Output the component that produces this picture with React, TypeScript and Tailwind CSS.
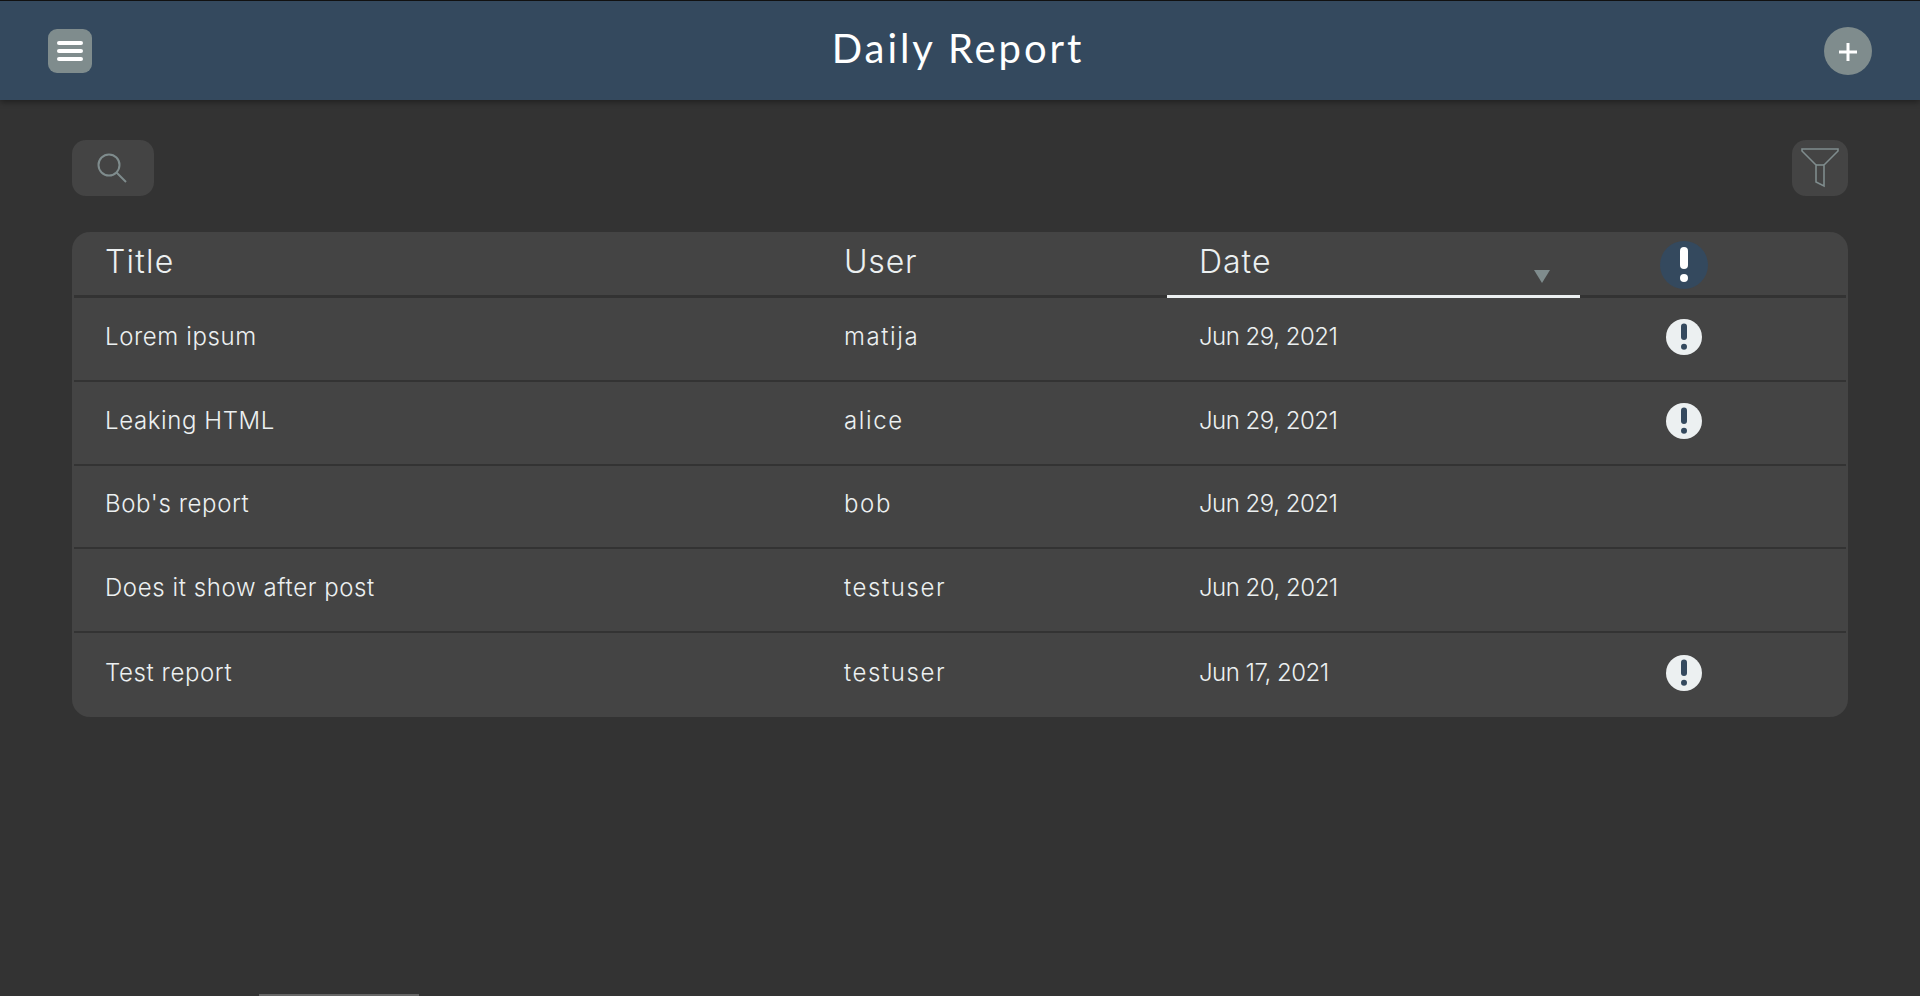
const REPORTS = [
  { title: "Lorem ipsum", user: "matija", date: "Jun 29, 2021", urgent: true },
  { title: "Leaking HTML", user: "alice", date: "Jun 29, 2021", urgent: true },
  { title: "Bob's report", user: "bob", date: "Jun 29, 2021", urgent: false },
  { title: "Does it show after post", user: "testuser", date: "Jun 20, 2021", urgent: false },
  { title: "Test report", user: "testuser", date: "Jun 17, 2021", urgent: true },
];

function AlertIcon({ size, bg, fg }: { size: number; bg: string; fg: string }) {
  return (
    <svg width={size} height={size} viewBox="0 0 48 48" className="block">
      <circle cx="24" cy="24" r="24" fill={bg} />
      <rect x="20" y="6" width="8" height="22" rx="4" fill={fg} />
      <circle cx="24" cy="37" r="4" fill={fg} />
    </svg>
  );
}

export default function App() {
  return (
    <main className="relative h-[996px] overflow-hidden bg-[#333333] font-['Inter',sans-serif] text-[#ecf0f1]">
      {/* Top bar */}
      <header className="relative flex h-[100px] items-center justify-between border-t-[1px] border-[#111111] bg-[#34495e] px-[48px] shadow-[0_2px_6px_rgba(0,0,0,0.4)]">
        <button className="flex h-[44px] w-[44px] flex-col items-center justify-center gap-[4px] rounded-[9px] bg-[#7f8c8d]">
          <span className="h-[4px] w-[26px] rounded-full bg-white" />
          <span className="h-[4px] w-[26px] rounded-full bg-white" />
          <span className="h-[4px] w-[26px] rounded-full bg-white" />
        </button>
        <h1 className="-mt-[5px] font-['Lato',sans-serif] text-[40px] font-normal leading-none tracking-[2.9px] text-white">Daily Report</h1>
        <button className="flex h-[48px] w-[48px] items-center justify-center rounded-full bg-[#7f8c8d]">
          <svg width="20" height="20" viewBox="0 0 20 20" className="mt-[2px]">
            <path d="M10 1v18M1 10h18" stroke="#ffffff" strokeWidth="3" />
          </svg>
        </button>
      </header>

      <div className="px-[72px] pt-[40px]">
        {/* Search and filter */}
        <div className="flex items-center justify-between">
          <button className="flex h-[56px] w-[82px] items-center justify-center rounded-[14px] bg-[#444444]">
            <svg width="32" height="32" viewBox="0 0 32 32" fill="none" stroke="#7f8c8d" strokeWidth="2" className="-ml-[3px]">
              <circle cx="13" cy="13" r="10.5" />
              <path d="M20.5 20.5 30 30" />
            </svg>
          </button>
          <button className="flex h-[56px] w-[56px] items-center justify-center rounded-[14px] bg-[#444444]">
            <svg width="38" height="40" viewBox="0 0 38 40" fill="none" stroke="#7f8c8d" strokeWidth="1.6">
              <path d="M1 1h36v2L23 17v21l-8-4V17L1 3z" strokeLinejoin="miter" />
              <path d="M15 17h8" />
            </svg>
          </button>
        </div>

        {/* Report table */}
        <section className="mt-[36px] h-[485px] overflow-hidden rounded-[18px] bg-[#444444] px-[2px]">
          <div className="grid h-[66px] grid-cols-[738px_355px_413px_1fr] border-b-[3px] border-[#333333]">
            <div className="pl-[31px] pt-[8px] text-[32px] font-light leading-[44px] tracking-[1.2px]">Title</div>
            <div className="pl-[32px] pt-[8px] text-[32px] font-light leading-[44px] tracking-[0.8px]">User</div>
            <div className="relative -mb-[3px] border-b-[3px] border-[#ecf0f1] pl-[32px] pt-[8px] text-[32px] font-light leading-[44px] tracking-[1px]">
              Date
              <span className="absolute left-[367px] top-[38px] h-0 w-0 border-x-[8px] border-t-[13px] border-x-transparent border-t-[#7f8c8d]" />
            </div>
            <div className="pl-[80px] pt-[9px]">
              <AlertIcon size={48} bg="#34495e" fg="#ffffff" />
            </div>
          </div>
          {REPORTS.map((report, i) => (
            <div
              key={report.title}
              className={`grid h-[83.75px] grid-cols-[738px_355px_413px_1fr] items-center pb-[4px] text-[24px] font-light ${
                i < REPORTS.length - 1 ? "border-b-[2px] border-[#333333]" : ""
              }`}
            >
              <div className="pl-[31px] tracking-[0.6px]">{report.title}</div>
              <div className="pl-[32px] tracking-[1.6px]">{report.user}</div>
              <div className="pl-[32px] tracking-[-0.5px]">{report.date}</div>
              <div className="pl-[86px]">
                {report.urgent && <AlertIcon size={36} bg="#ecf0f1" fg="#34495e" />}
              </div>
            </div>
          ))}
        </section>
      </div>

      {/* Scrollbar sliver at the bottom edge */}
      <div className="absolute bottom-0 left-[259px] h-[2px] w-[160px] bg-[#666666]" />
    </main>
  );
}
